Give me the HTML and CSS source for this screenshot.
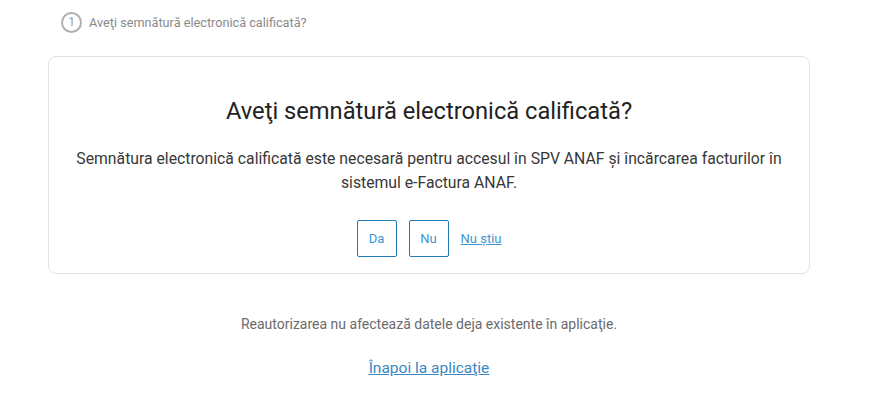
FILE: index.html
```html
<!DOCTYPE html>
<html lang="ro">
<head>
<meta charset="utf-8">
<link rel="stylesheet" href="styles.css">
</head>
<body>
<div class="page">
  <div class="step">
    <span class="step-num">1</span>
    <span class="step-label">Aveţi semnătură electronică calificată?</span>
  </div>
  <div class="card">
    <h1 class="title">Aveţi semnătură electronică calificată?</h1>
    <p class="desc">Semnătura electronică calificată este necesară pentru accesul în SPV ANAF și încărcarea facturilor în sistemul e-Factura ANAF.</p>
    <div class="actions">
      <button class="btn">Da</button>
      <button class="btn">Nu</button>
      <a class="link-small" href="#">Nu știu</a>
    </div>
  </div>
  <p class="note">Reautorizarea nu afectează datele deja existente în aplicaţie.</p>
  <div class="back-wrap"><a class="back" href="#">Înapoi la aplicaţie</a></div>
</div>
</body>
</html>
```
FILE: styles.css
```css
html, body { margin: 0; padding: 0; background: #fff; }
body { font-family: Roboto, "Noto Sans", sans-serif; }
.page { width: 762px; margin-left: 48px; padding-top: 11px; }
.step { display: flex; align-items: center; gap: 7px; padding-left: 13px; height: 22px; }
.step-num {
  box-sizing: border-box; width: 21px; height: 21px; border: 2px solid #b0b0b0; border-radius: 50%;
  display: flex; align-items: center; justify-content: center; font-size: 12px; color: #999;
}
.step-label { font-size: 12.7px; color: #8a8a8a; }
.card {
  box-sizing: border-box; margin-top: 23px; height: 218px; border: 1px solid #e3e3e3; border-radius: 8px;
  display: flex; flex-direction: column; align-items: center; padding-top: 39px;
}
.title { margin: 0; font-weight: 400; font-size: 23.7px; line-height: 30px; color: #222; }
.desc { margin: 21px 0 0; width: 720px; text-align: center; font-size: 15.75px; line-height: 24px; color: #383838; }
.actions { display: flex; align-items: center; gap: 12px; margin-top: 25px; }
.btn {
  box-sizing: border-box; width: 40px; height: 37px; background: #fff; border: 1px solid #1f7ab8; border-radius: 2px;
  font-family: Roboto, sans-serif; font-size: 13px; color: #3d95d0; padding: 0;
}
.link-small { font-size: 13px; color: #3d95d0; text-decoration: underline; }
.note { margin: 41px 0 0; text-align: center; font-size: 14px; color: #6b6b6b; line-height: 18px; }
.back-wrap { text-align: center; margin-top: 25px; }
.back { font-size: 15.5px; color: #3a87c4; text-decoration: underline; }
```
